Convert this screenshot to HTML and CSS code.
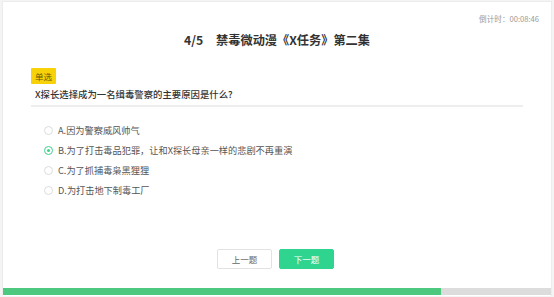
FILE: index.html
```html
<!DOCTYPE html>
<html lang="zh-CN">
  <head>
    <meta charset="UTF-8" />
    <meta name="viewport" content="width=device-width, initial-scale=1.0" />
    <title>答题</title>
    <link rel="stylesheet" href="styles.css">
  </head>
  <body>
    <div class="quiz-card">
      <div class="timer">倒计时：00:08:46</div>
      <h1 class="quiz-title"><span class="num">4/5</span>禁毒微动漫《X任务》第二集</h1>
      <div class="question">
        <span class="badge">单选</span>
        <p class="question-text">X探长选择成为一名缉毒警察的主要原因是什么?</p>
      </div>
      <ul class="options">
        <li><span class="radio"></span>A.因为警察威风帅气</li>
        <li class="checked"><span class="radio"></span>B.为了打击毒品犯罪，让和X探长母亲一样的悲剧不再重演</li>
        <li><span class="radio"></span>C.为了抓捕毒枭黑狸狸</li>
        <li><span class="radio"></span>D.为打击地下制毒工厂</li>
      </ul>
      <div class="btn-container">
        <button class="btn-prev">上一题</button>
        <button class="btn-next">下一题</button>
      </div>
      <div class="progress"><div class="progress-bar" style="width: 80%"></div></div>
    </div>
  </body>
</html>
```

FILE: styles.css
```css
body {
  margin: 0;
  background: #f4f4f4;
  font-family: "Noto Sans CJK SC", "Noto Sans", sans-serif;
}

.quiz-card {
  margin: 1px 2px 0;
  height: 295px;
  background: #fff;
  border: 1px solid #ececec;
  border-bottom: none;
  display: flex;
  flex-direction: column;
  box-sizing: border-box;
}

.timer {
  align-self: flex-end;
  margin: 11px 12px 0 0;
  font-size: 7.6px;
  line-height: 11px;
  color: #999;
}

.quiz-title {
  margin: 6px 0 0;
  text-align: center;
  font-size: 12.2px;
  line-height: 20px;
  font-weight: bold;
  color: #333;
}

.quiz-title .num {
  margin-right: 13px;
}

.question {
  margin: 11px 28px 0 28px;
  border-bottom: 2px solid #eeeeee;
}

.badge {
  display: inline-block;
  padding: 0 4px;
  height: 16px;
  line-height: 16px;
  font-size: 8.5px;
  color: #6a5a00;
  background: #f7d208;
  border-radius: 1px;
}

.question-text {
  margin: 1px 0 3px 4px;
  font-size: 9.4px;
  line-height: 16px;
  color: #333;
  font-weight: 500;
}

.options {
  list-style: none;
  margin: 13px 0 0 41px;
  padding: 0;
}

.options li {
  display: flex;
  align-items: center;
  height: 20px;
  font-size: 9.2px;
  color: #555;
}

.radio {
  width: 7px;
  height: 7px;
  margin-right: 5px;
  border: 1px solid #dcdcdc;
  border-radius: 50%;
  position: relative;
}

.checked .radio {
  border-color: #3ccf8e;
}

.checked .radio::after {
  content: "";
  position: absolute;
  left: 2px;
  top: 2px;
  width: 3px;
  height: 3px;
  border-radius: 50%;
  background: #3ccf8e;
}

.btn-container {
  display: flex;
  justify-content: center;
  gap: 7px;
  margin-top: auto;
  margin-bottom: 19px;
  padding-right: 3px;
}

.btn-container button {
  width: 55px;
  height: 20px;
  font-size: 8.5px;
  font-family: inherit;
  border-radius: 2px;
  cursor: pointer;
}

.btn-prev {
  background: #fff;
  border: 1px solid #e2e2e2;
  color: #666;
}

.btn-next {
  background: #2fd48e;
  border: 1px solid #2fd48e;
  color: #fff;
}

.progress {
  height: 7px;
  margin-bottom: 1px;
  background: #dcdcdc;
}

.progress-bar {
  height: 100%;
  background: #4dc97f;
}
```
